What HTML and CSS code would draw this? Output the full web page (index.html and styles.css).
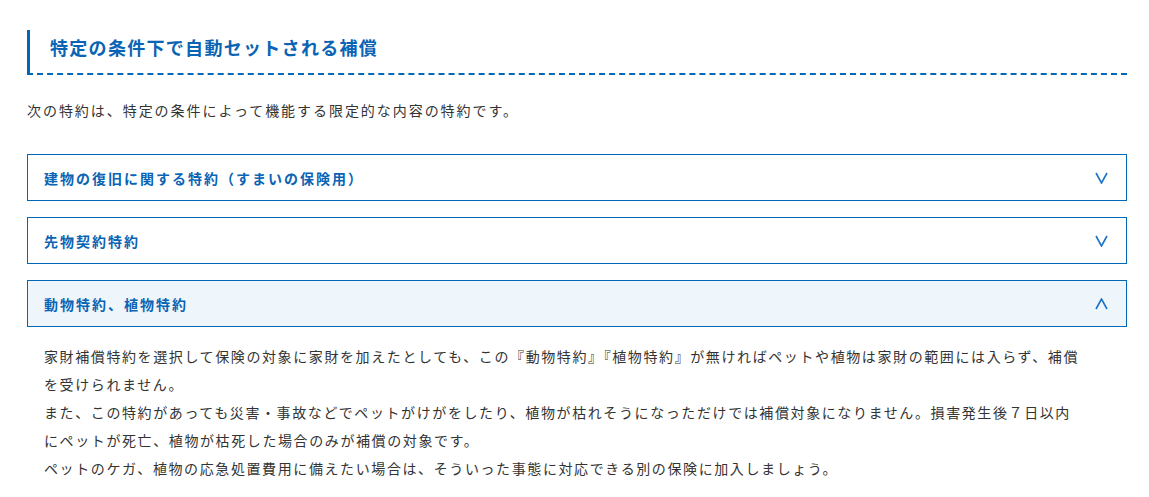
FILE: index.html
```html
<!DOCTYPE html>
<html lang="ja">
<head>
  <meta charset="UTF-8" />
  <meta name="viewport" content="width=device-width, initial-scale=1.0" />
  <title>特定の条件下で自動セットされる補償</title>
  <link rel="stylesheet" href="styles.css">
</head>
<body>
  <section class="section">
    <h2 class="section-title">特定の条件下で自動セットされる補償</h2>
    <p class="lead">次の特約は、特定の条件によって機能する限定的な内容の特約です。</p>

    <div class="accordion">
      <div class="acc-item">
        <button class="acc-head" onclick="toggle(this)">
          <span>建物の復旧に関する特約（すまいの保険用）</span>
          <svg class="chev" width="13" height="12" viewBox="0 0 13 12"><polyline points="1,1 6.5,11 12,1" /></svg>
        </button>
        <div class="acc-body"></div>
      </div>
      <div class="acc-item">
        <button class="acc-head" onclick="toggle(this)">
          <span>先物契約特約</span>
          <svg class="chev" width="13" height="12" viewBox="0 0 13 12"><polyline points="1,1 6.5,11 12,1" /></svg>
        </button>
        <div class="acc-body"></div>
      </div>
      <div class="acc-item open">
        <button class="acc-head" onclick="toggle(this)">
          <span>動物特約、植物特約</span>
          <svg class="chev" width="13" height="12" viewBox="0 0 13 12"><polyline points="1,1 6.5,11 12,1" /></svg>
        </button>
        <div class="acc-body">
          <p>家財補償特約を選択して保険の対象に家財を加えたとしても、この『動物特約』『植物特約』が無ければペットや植物は家財の範囲には入らず、補償を受けられません。</p>
          <p>また、この特約があっても災害・事故などでペットがけがをしたり、植物が枯れそうになっただけでは補償対象になりません。損害発生後７日以内<br>にペットが死亡、植物が枯死した場合のみが補償の対象です。</p>
          <p>ペットのケガ、植物の応急処置費用に備えたい場合は、そういった事態に対応できる別の保険に加入しましょう。</p>
        </div>
      </div>
    </div>
  </section>

  <script>
    function toggle(btn) {
      btn.parentElement.classList.toggle('open');
    }
  </script>
</body>
</html>
```

FILE: styles.css
```css
body {
  margin: 0;
  background: #fff;
  color: #333;
  font-family: "Noto Sans CJK JP", "Noto Sans", sans-serif;
}
.section {
  width: 1100px;
  padding: 30px 0 0 27px;
}
.section-title {
  margin: 0;
  padding: 4px 0 13px 20px;
  border-left: 3px solid #0068b7;
  border-bottom: 2px dashed #0068b7;
  color: #0a64b4;
  font-size: 18px;
  line-height: 26px;
  font-weight: bold;
  letter-spacing: 1.3px;
}
.lead {
  margin: 23px 0 32px;
  font-size: 14px;
  line-height: 24px;
  letter-spacing: 1.95px;
}
.acc-item {
  margin-bottom: 16px;
}
.acc-head {
  display: flex;
  justify-content: space-between;
  align-items: center;
  width: 100%;
  height: 47px;
  padding: 0 18px 0 16px;
  border: 1px solid #0068b7;
  background: #fff;
  color: #0a64b4;
  font-family: inherit;
  font-size: 14px;
  font-weight: bold;
  letter-spacing: 2px;
  text-align: left;
  cursor: pointer;
  box-sizing: border-box;
}
.chev polyline {
  fill: none;
  stroke: #1a73c8;
  stroke-width: 1.6;
}
.acc-body {
  display: none;
  padding: 15px 42px 0 17px;
  font-size: 14px;
  line-height: 28px;
  letter-spacing: 1.6px;
}
.acc-body p {
  margin: 0;
}
.acc-item.open .acc-head {
  background: #eef6fc;
}
.acc-item.open .chev {
  transform: rotate(180deg);
}
.acc-item.open .acc-body {
  display: block;
}
```
